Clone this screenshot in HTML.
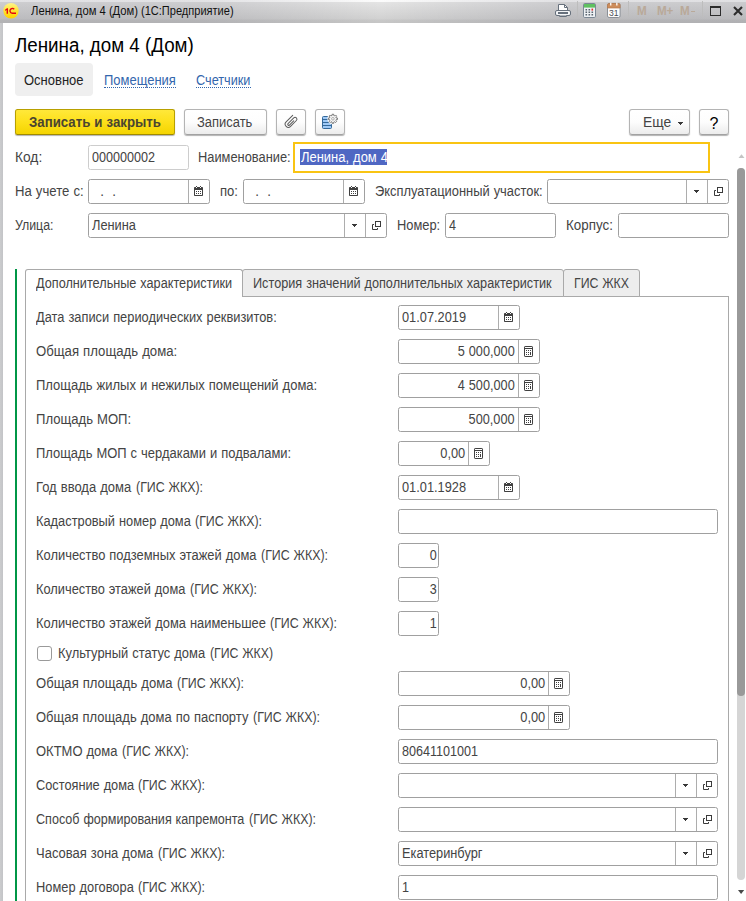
<!DOCTYPE html>
<html><head><meta charset="utf-8"><title>1C</title>
<style>
html,body{margin:0;padding:0;}
body{width:746px;height:901px;overflow:hidden;background:#fff;font-family:"Liberation Sans",sans-serif;font-size:13px;color:#333;position:relative;}
.a{position:absolute;}
.t{position:absolute;white-space:pre;line-height:16px;height:16px;color:#444;font-size:14px;transform-origin:0 0;word-spacing:0.45px;}
.i{position:absolute;box-sizing:border-box;border:1px solid #a0a0a0;border-radius:2.5px;background:#fff;height:25px;}
.i.lt{border-color:#cdcdcd;}
.s{position:absolute;top:0;bottom:0;width:1px;background:#adadad;}
.b{position:absolute;box-sizing:border-box;border:1px solid #b4b4b4;border-bottom-color:#a2a2a2;border-radius:3px;height:26px;background:linear-gradient(#ffffff 0%,#fdfdfd 50%,#ececec 100%);box-shadow:0 1px 1px rgba(0,0,0,0.3);}
.lk{position:absolute;color:#3366ad;font-size:13px;white-space:pre;border-bottom:1px dotted #2b5ea8;line-height:15px;height:15px;}
svg{position:absolute;overflow:visible;}
</style></head><body>
<div class="a" style="left:0;top:0;width:746px;height:23px;background:linear-gradient(90deg,rgba(0,0,25,0.10) 0%,rgba(0,0,25,0.10) 27%,rgba(0,0,25,0.05) 40%,rgba(0,0,0,0) 51%,rgba(0,0,25,0.05) 62%,rgba(0,0,25,0.10) 75%,rgba(0,0,25,0.11) 100%),linear-gradient(180deg,#fcfcfc 0px,#fbfbfb 1.5px,#e4e4e4 2.5px,#d1d1d1 19px,#c8c8c8 20px,#c6c6c6 22.5px,#e8e8e8 23px);"></div>
<div class="a" style="left:0;top:23px;width:3px;height:878px;background:linear-gradient(90deg,#cbccce,#c3c4c7);"></div>
<svg style="left:3px;top:3px" width="16" height="16" viewBox="0 0 16 16"><defs><linearGradient id="lg" x1="0" y1="0" x2="0" y2="1"><stop offset="0" stop-color="#fff38a"/><stop offset="0.55" stop-color="#ffe32a"/><stop offset="1" stop-color="#ffd000"/></linearGradient></defs><circle cx="8" cy="7.8" r="7.7" fill="url(#lg)"/><path d="M2.2 6.6 L4 5.2 H5 V10.8 H3.6 V7 L2.2 7.9 Z" fill="#e30613"/><path d="M11.2 6.3 A2.4 2.4 0 1 0 8.9 10.2 H13" fill="none" stroke="#e30613" stroke-width="1.35"/></svg>
<div class="t" style="left:30.8px;top:3px;font-size:12px;color:#111;word-spacing:0;transform:scaleX(0.937);">Ленина, дом 4 (Дом)</div>
<div class="t" style="left:141px;top:3px;font-size:12px;color:#111;transform:scaleX(0.92);">(1С:Предприятие)</div>
<svg style="left:555px;top:3px" width="17" height="15" viewBox="0 0 17 15"><path d="M3.5 7.5 V1.5 H9.5 L12.5 4.5 V7.5" fill="#fdfdfd" stroke="#66707c" stroke-width="1"/><path d="M9.5 1.5 V4.5 H12.5" fill="none" stroke="#66707c" stroke-width="1"/><rect x="0.5" y="7.5" width="15" height="5" rx="1.5" fill="#f2f4f6" stroke="#66707c" stroke-width="1"/><rect x="3.5" y="9.5" width="9" height="1" fill="#fff" stroke="#66707c" stroke-width="1"/><path d="M4.5 12.5 V13.5 H11.5 V12.5" fill="#fff" stroke="#66707c" stroke-width="1"/></svg>
<div class="a" style="left:577px;top:1px;width:1px;height:16px;background:#bdbdbd;"></div>
<svg style="left:583px;top:3px" width="13" height="15" viewBox="0 0 13 15"><rect x="0.5" y="0.5" width="12" height="14" rx="1.2" fill="#eef1f4" stroke="#7b8794" stroke-width="1"/><rect x="1" y="1" width="11" height="3.6" fill="#5fc060"/><g fill="#5b6670"><rect x="2.5" y="6" width="1.6" height="1.5"/><rect x="5.5" y="6" width="1.6" height="1.5"/><rect x="2.5" y="8.5" width="1.6" height="1.5"/><rect x="5.5" y="8.5" width="1.6" height="1.5"/><rect x="8.5" y="8.5" width="1.6" height="1.5"/><rect x="2.5" y="11" width="1.6" height="1.5"/><rect x="5.5" y="11" width="1.6" height="1.5"/><rect x="8.5" y="11" width="1.6" height="1.5"/></g><rect x="8.5" y="5.6" width="1.6" height="2" fill="#e03030"/></svg>
<svg style="left:607px;top:3px" width="14" height="15" viewBox="0 0 14 15"><rect x="0.5" y="0.5" width="12.6" height="14" rx="1.6" fill="#fdfdfd" stroke="#8a8f96" stroke-width="1"/><path d="M0.5 5 V2.1 A1.6 1.6 0 0 1 2.1 0.5 H11.5 A1.6 1.6 0 0 1 13.1 2.1 V5 Z" fill="#cd8d5c" stroke="#b9794a" stroke-width="0.7"/><rect x="3.1" y="-0.3" width="1.3" height="2.8" fill="#fff"/><rect x="9.2" y="-0.3" width="1.3" height="2.8" fill="#fff"/><text x="6.8" y="13" font-family="Liberation Sans, sans-serif" font-size="9.5" fill="#4a4f55" text-anchor="middle" textLength="9.6" lengthAdjust="spacingAndGlyphs">31</text></svg>
<div class="a" style="left:628px;top:1px;width:1px;height:16px;background:#bdbdbd;"></div>
<div class="t" style="left:637px;top:3px;font-size:13px;font-weight:bold;color:#b9a999;transform:scaleX(0.9);">M</div>
<div class="t" style="left:656.8px;top:3px;font-size:13px;font-weight:bold;color:#b9a999;transform:scaleX(0.9);letter-spacing:-0.3px;">M+</div>
<div class="t" style="left:679.6px;top:3px;font-size:13px;font-weight:bold;color:#b9a999;transform:scaleX(0.9);">M</div>
<div class="a" style="left:690.6px;top:10.5px;width:4.4px;height:1.6px;background:#b9a999;"></div>
<div class="a" style="left:702px;top:1px;width:1px;height:16px;background:#bdbdbd;"></div>
<div class="a" style="left:710px;top:6px;width:11px;height:10px;box-sizing:border-box;border:1px solid #2c2c2c;border-top-width:2px;"></div>
<svg style="left:733px;top:6px" width="10" height="10" viewBox="0 0 10 10"><path d="M1 1 L9 9 M9 1 L1 9" stroke="#2c2c2c" stroke-width="2.1"/></svg>
<div class="t" style="left:15px;top:33.6px;font-size:19.5px;line-height:22px;height:22px;color:#000;word-spacing:0;transform:scaleX(0.9625);">Ленина, дом 4 (Дом)</div>
<div class="a" style="left:15px;top:63px;width:78px;height:33px;background:#efefef;border-radius:4px;"></div>
<div class="t" style="left:24px;top:72px;transform:scaleX(0.9275);color:#222;">Основное</div>
<div class="t" style="left:104px;top:72px;transform:scaleX(0.9267);color:#3366ad;">Помещения</div>
<div class="a" style="left:104px;top:87px;width:72px;height:0;border-top:1px dotted #3366ad;"></div>
<div class="t" style="left:196px;top:72px;transform:scaleX(0.9067);color:#3366ad;">Счетчики</div>
<div class="a" style="left:196px;top:87px;width:55px;height:0;border-top:1px dotted #3366ad;"></div>
<div class="b" style="left:15px;top:109px;width:160px;background:linear-gradient(#ffe83a 0%,#fde01a 50%,#f4d400 100%);border-color:#b8a000;border-bottom-color:#a08a00;border-radius:2.5px;"></div>
<div class="t" style="left:29px;top:114px;transform:scaleX(0.9451);font-weight:bold;color:#4a4530;">Записать и закрыть</div>
<div class="b" style="left:184px;top:109px;width:83px;"></div>
<div class="t" style="left:197.4px;top:114px;transform:scaleX(0.9246);">Записать</div>
<div class="b" style="left:276px;top:109px;width:30px;"></div>
<div class="b" style="left:315px;top:109px;width:30px;"></div>
<svg style="left:276px;top:109px" width="30" height="26" viewBox="0 0 30 26"><g transform="translate(15,12.5) rotate(45)" fill="none" stroke="#5c5c5c" stroke-width="1.0" stroke-linecap="round"><path d="M-3.2,-5.6 L-3.2,3.7 A3.15 3.15 0 0 0 3.1,3.7 L3.1,-4.5 A1.85 1.85 0 0 0 -0.6,-4.5 L-0.6,3.6 A1 1 0 0 0 1.4,3.6 L1.4,-2.4"/></g></svg>
<svg style="left:315px;top:109px" width="30" height="26" viewBox="0 0 30 26"><rect x="7.5" y="7.5" width="9" height="12" rx="1" fill="#9fc9f6" stroke="#34699a" stroke-width="1"/><path d="M7.5 10.5 H16.5 M7.5 13.5 H16.5 M7.5 16.5 H16.5" stroke="#34699a" stroke-width="1"/><circle cx="17.9" cy="9.8" r="5.6" fill="#fbfbfb"/><polygon transform="translate(17.9,9.8)" points="4.53,-0.79 4.53,0.79 3.42,0.76 2.96,1.88 3.76,2.65 2.65,3.76 1.88,2.96 0.76,3.42 0.79,4.53 -0.79,4.53 -0.76,3.42 -1.88,2.96 -2.65,3.76 -3.76,2.65 -2.96,1.88 -3.42,0.76 -4.53,0.79 -4.53,-0.79 -3.42,-0.76 -2.96,-1.88 -3.76,-2.65 -2.65,-3.76 -1.88,-2.96 -0.76,-3.42 -0.79,-4.53 0.79,-4.53 0.76,-3.42 1.88,-2.96 2.65,-3.76 3.76,-2.65 2.96,-1.88 3.42,-0.76" fill="#f6f6f6" stroke="#6e6e6e" stroke-width="0.9"/><circle cx="17.9" cy="9.8" r="1.3" fill="#fff" stroke="#8a8a8a" stroke-width="0.7"/></svg>
<div class="b" style="left:629px;top:109px;width:61px;"></div>
<div class="t" style="left:643px;top:114px;transform:scaleX(0.9915);">Еще</div>
<svg style="left:678px;top:122px" width="5" height="3" viewBox="0 0 5 3" shape-rendering="crispEdges"><rect x="0" y="0" width="5" height="1" fill="#383838"/><rect x="1" y="1" width="3" height="1" fill="#383838"/><rect x="2" y="2" width="1" height="1" fill="#383838"/></svg>
<div class="b" style="left:699px;top:109px;width:30px;"></div>
<div class="t" style="left:709.6px;top:115px;font-size:16px;line-height:18px;height:18px;color:#000;">?</div>
<div class="t" style="left:14.5px;top:149px;transform:scaleX(0.9821);">Код:</div>
<div class="i lt" style="left:88px;top:145px;width:101px"><div class="t" style="left:3px;top:3px;transform:scaleX(0.8990);">000000002</div></div>
<div class="t" style="left:198.4px;top:149px;transform:scaleX(0.9179);">Наименование:</div>
<div class="a" style="left:293px;top:142px;width:417px;height:31px;box-sizing:border-box;border:2px solid #f9c413;background:#fff;"></div>
<div class="a" style="left:300px;top:149px;width:87px;height:16px;background:#4f67c3;"></div>
<div class="t" style="left:301px;top:149px;transform:scaleX(0.9257);color:#fff;">Ленина, дом 4</div>
<div class="t" style="left:14.5px;top:183px;transform:scaleX(0.9384);">На учете с:</div>
<div class="i" style="left:88px;top:179px;width:122px"><div class="s" style="left:99px"></div><svg style="left:105px;top:6px" width="9" height="10" viewBox="0 0 9 10"><rect x="0" y="1" width="9" height="9" rx="0.8" fill="#404040"/><rect x="1" y="4" width="7" height="5" fill="#fff"/><rect x="2" y="0" width="1" height="1" fill="#404040"/><rect x="6" y="0" width="1" height="1" fill="#404040"/><rect x="2" y="1" width="1" height="1" fill="#fff"/><rect x="6" y="1" width="1" height="1" fill="#fff"/><rect x="2" y="5" width="1" height="1" fill="#404040"/><rect x="4" y="5" width="1" height="1" fill="#404040"/><rect x="6" y="5" width="1" height="1" fill="#404040"/><rect x="2" y="7" width="1" height="1" fill="#404040"/><rect x="4" y="7" width="1" height="1" fill="#404040"/><rect x="6" y="7" width="1" height="1" fill="#404040"/></svg><div class="t" style="left:3px;top:3px;transform:scaleX(0.9547);">  .  .</div></div>
<div class="t" style="left:220px;top:183px;transform:scaleX(0.9347);">по:</div>
<div class="i" style="left:243px;top:179px;width:122px"><div class="s" style="left:99px"></div><svg style="left:105px;top:6px" width="9" height="10" viewBox="0 0 9 10"><rect x="0" y="1" width="9" height="9" rx="0.8" fill="#404040"/><rect x="1" y="4" width="7" height="5" fill="#fff"/><rect x="2" y="0" width="1" height="1" fill="#404040"/><rect x="6" y="0" width="1" height="1" fill="#404040"/><rect x="2" y="1" width="1" height="1" fill="#fff"/><rect x="6" y="1" width="1" height="1" fill="#fff"/><rect x="2" y="5" width="1" height="1" fill="#404040"/><rect x="4" y="5" width="1" height="1" fill="#404040"/><rect x="6" y="5" width="1" height="1" fill="#404040"/><rect x="2" y="7" width="1" height="1" fill="#404040"/><rect x="4" y="7" width="1" height="1" fill="#404040"/><rect x="6" y="7" width="1" height="1" fill="#404040"/></svg><div class="t" style="left:3px;top:3px;transform:scaleX(0.9547);">  .  .</div></div>
<div class="t" style="left:374.8px;top:183px;transform:scaleX(0.9215);">Эксплуатационный участок:</div>
<div class="i" style="left:547px;top:179px;width:182px"><div class="s" style="left:159px"></div><svg style="left:166px;top:7px" width="9" height="9" viewBox="0 0 9 9"><rect x="3.5" y="0.5" width="5" height="5" fill="#fff" stroke="#3b3b3b" stroke-width="1"/><path d="M2 3.5 H0.5 V8.5 H5.5 V7" fill="none" stroke="#3b3b3b" stroke-width="1"/></svg><div class="s" style="left:138px"></div><svg style="left:146px;top:10px" width="5" height="3" viewBox="0 0 5 3" shape-rendering="crispEdges"><rect x="0" y="0" width="5" height="1" fill="#383838"/><rect x="1" y="1" width="3" height="1" fill="#383838"/><rect x="2" y="2" width="1" height="1" fill="#383838"/></svg></div>
<div class="t" style="left:14.5px;top:217px;transform:scaleX(0.8816);">Улица:</div>
<div class="i" style="left:88px;top:213px;width:299px"><div class="s" style="left:276px"></div><svg style="left:283px;top:7px" width="9" height="9" viewBox="0 0 9 9"><rect x="3.5" y="0.5" width="5" height="5" fill="#fff" stroke="#3b3b3b" stroke-width="1"/><path d="M2 3.5 H0.5 V8.5 H5.5 V7" fill="none" stroke="#3b3b3b" stroke-width="1"/></svg><div class="s" style="left:255px"></div><svg style="left:263px;top:10px" width="5" height="3" viewBox="0 0 5 3" shape-rendering="crispEdges"><rect x="0" y="0" width="5" height="1" fill="#383838"/><rect x="1" y="1" width="3" height="1" fill="#383838"/><rect x="2" y="2" width="1" height="1" fill="#383838"/></svg><div class="t" style="left:3px;top:3px;transform:scaleX(0.9158);">Ленина</div></div>
<div class="t" style="left:396.6px;top:217px;transform:scaleX(0.9195);">Номер:</div>
<div class="i" style="left:445px;top:213px;width:111px"><div class="t" style="left:3px;top:3px;transform:scaleX(0.8990);">4</div></div>
<div class="t" style="left:566px;top:217px;transform:scaleX(0.9553);">Корпус:</div>
<div class="i" style="left:618px;top:213px;width:111px"></div>
<div class="a" style="left:15px;top:269px;width:2px;height:632px;background:#009646;"></div>
<div class="a" style="left:25px;top:296px;width:704px;height:620px;box-sizing:border-box;border:1px solid #a9a9a9;background:#fff;"></div>
<div class="a" style="left:242px;top:269px;width:322px;height:28px;box-sizing:border-box;border:1px solid #a9a9a9;border-radius:3px 3px 0 0;background:#ededed;"></div>
<div class="a" style="left:563px;top:269px;width:77px;height:28px;box-sizing:border-box;border:1px solid #a9a9a9;border-radius:3px 3px 0 0;background:#ededed;"></div>
<div class="a" style="left:25px;top:269px;width:218px;height:28px;box-sizing:border-box;border:1px solid #a9a9a9;border-bottom:none;border-radius:3px 3px 0 0;background:#fff;"></div>
<div class="t" style="left:36px;top:275px;transform:scaleX(0.9062);">Дополнительные характеристики</div>
<div class="t" style="left:253px;top:275px;transform:scaleX(0.9063);">История значений дополнительных характеристик</div>
<div class="t" style="left:574px;top:275px;transform:scaleX(0.8798);">ГИС ЖКХ</div>
<div class="t" style="left:36px;top:309px;transform:scaleX(0.9172);">Дата записи периодических реквизитов:</div>
<div class="i" style="left:398px;top:305px;width:122px"><div class="s" style="left:99px"></div><svg style="left:105px;top:6px" width="9" height="10" viewBox="0 0 9 10"><rect x="0" y="1" width="9" height="9" rx="0.8" fill="#404040"/><rect x="1" y="4" width="7" height="5" fill="#fff"/><rect x="2" y="0" width="1" height="1" fill="#404040"/><rect x="6" y="0" width="1" height="1" fill="#404040"/><rect x="2" y="1" width="1" height="1" fill="#fff"/><rect x="6" y="1" width="1" height="1" fill="#fff"/><rect x="2" y="5" width="1" height="1" fill="#404040"/><rect x="4" y="5" width="1" height="1" fill="#404040"/><rect x="6" y="5" width="1" height="1" fill="#404040"/><rect x="2" y="7" width="1" height="1" fill="#404040"/><rect x="4" y="7" width="1" height="1" fill="#404040"/><rect x="6" y="7" width="1" height="1" fill="#404040"/></svg><div class="t" style="left:3px;top:3px;transform:scaleX(0.9134);">01.07.2019</div></div>
<div class="t" style="left:36px;top:343px;transform:scaleX(0.9398);">Общая площадь дома:</div>
<div class="i" style="left:398px;top:339px;width:142px"><div class="s" style="left:119px"></div><svg style="left:125px;top:6px" width="9" height="11" viewBox="0 0 9 11"><rect x="0.5" y="0.5" width="8" height="10" rx="0.6" fill="#fff" stroke="#404040" stroke-width="1"/><rect x="0" y="2" width="9" height="1" fill="#404040"/><rect x="6" y="6" width="1" height="3" fill="#404040"/><rect x="2" y="4" width="1" height="1" fill="#404040"/><rect x="4" y="4" width="1" height="1" fill="#404040"/><rect x="6" y="4" width="1" height="1" fill="#404040"/><rect x="2" y="6" width="1" height="1" fill="#404040"/><rect x="4" y="6" width="1" height="1" fill="#404040"/><rect x="2" y="8" width="1" height="1" fill="#404040"/><rect x="4" y="8" width="1" height="1" fill="#404040"/></svg><div class="t" style="right:24px;top:3px;transform-origin:100% 0;transform:scaleX(0.9086);">5 000,000</div></div>
<div class="t" style="left:36px;top:377px;transform:scaleX(0.9273);">Площадь жилых и нежилых помещений дома:</div>
<div class="i" style="left:398px;top:373px;width:142px"><div class="s" style="left:119px"></div><svg style="left:125px;top:6px" width="9" height="11" viewBox="0 0 9 11"><rect x="0.5" y="0.5" width="8" height="10" rx="0.6" fill="#fff" stroke="#404040" stroke-width="1"/><rect x="0" y="2" width="9" height="1" fill="#404040"/><rect x="6" y="6" width="1" height="3" fill="#404040"/><rect x="2" y="4" width="1" height="1" fill="#404040"/><rect x="4" y="4" width="1" height="1" fill="#404040"/><rect x="6" y="4" width="1" height="1" fill="#404040"/><rect x="2" y="6" width="1" height="1" fill="#404040"/><rect x="4" y="6" width="1" height="1" fill="#404040"/><rect x="2" y="8" width="1" height="1" fill="#404040"/><rect x="4" y="8" width="1" height="1" fill="#404040"/></svg><div class="t" style="right:24px;top:3px;transform-origin:100% 0;transform:scaleX(0.9086);">4 500,000</div></div>
<div class="t" style="left:36px;top:411px;transform:scaleX(0.9348);">Площадь МОП:</div>
<div class="i" style="left:398px;top:407px;width:142px"><div class="s" style="left:119px"></div><svg style="left:125px;top:6px" width="9" height="11" viewBox="0 0 9 11"><rect x="0.5" y="0.5" width="8" height="10" rx="0.6" fill="#fff" stroke="#404040" stroke-width="1"/><rect x="0" y="2" width="9" height="1" fill="#404040"/><rect x="6" y="6" width="1" height="3" fill="#404040"/><rect x="2" y="4" width="1" height="1" fill="#404040"/><rect x="4" y="4" width="1" height="1" fill="#404040"/><rect x="6" y="4" width="1" height="1" fill="#404040"/><rect x="2" y="6" width="1" height="1" fill="#404040"/><rect x="4" y="6" width="1" height="1" fill="#404040"/><rect x="2" y="8" width="1" height="1" fill="#404040"/><rect x="4" y="8" width="1" height="1" fill="#404040"/></svg><div class="t" style="right:24px;top:3px;transform-origin:100% 0;transform:scaleX(0.9090);">500,000</div></div>
<div class="t" style="left:36px;top:445px;transform:scaleX(0.9252);">Площадь МОП с чердаками и подвалами:</div>
<div class="i" style="left:398px;top:441px;width:92px"><div class="s" style="left:69px"></div><svg style="left:75px;top:6px" width="9" height="11" viewBox="0 0 9 11"><rect x="0.5" y="0.5" width="8" height="10" rx="0.6" fill="#fff" stroke="#404040" stroke-width="1"/><rect x="0" y="2" width="9" height="1" fill="#404040"/><rect x="6" y="6" width="1" height="3" fill="#404040"/><rect x="2" y="4" width="1" height="1" fill="#404040"/><rect x="4" y="4" width="1" height="1" fill="#404040"/><rect x="6" y="4" width="1" height="1" fill="#404040"/><rect x="2" y="6" width="1" height="1" fill="#404040"/><rect x="4" y="6" width="1" height="1" fill="#404040"/><rect x="2" y="8" width="1" height="1" fill="#404040"/><rect x="4" y="8" width="1" height="1" fill="#404040"/></svg><div class="t" style="right:24px;top:3px;transform-origin:100% 0;transform:scaleX(0.9175);">0,00</div></div>
<div class="t" style="left:36px;top:479px;transform:scaleX(0.9287);">Год ввода дома </div>
<div class="t" style="left:135.8px;top:479px;transform:scaleX(0.8848);">(ГИС ЖКХ):</div>
<div class="i" style="left:398px;top:475px;width:122px"><div class="s" style="left:99px"></div><svg style="left:105px;top:6px" width="9" height="10" viewBox="0 0 9 10"><rect x="0" y="1" width="9" height="9" rx="0.8" fill="#404040"/><rect x="1" y="4" width="7" height="5" fill="#fff"/><rect x="2" y="0" width="1" height="1" fill="#404040"/><rect x="6" y="0" width="1" height="1" fill="#404040"/><rect x="2" y="1" width="1" height="1" fill="#fff"/><rect x="6" y="1" width="1" height="1" fill="#fff"/><rect x="2" y="5" width="1" height="1" fill="#404040"/><rect x="4" y="5" width="1" height="1" fill="#404040"/><rect x="6" y="5" width="1" height="1" fill="#404040"/><rect x="2" y="7" width="1" height="1" fill="#404040"/><rect x="4" y="7" width="1" height="1" fill="#404040"/><rect x="6" y="7" width="1" height="1" fill="#404040"/></svg><div class="t" style="left:3px;top:3px;transform:scaleX(0.9134);">01.01.1928</div></div>
<div class="t" style="left:36px;top:513px;transform:scaleX(0.9163);">Кадастровый номер дома </div>
<div class="t" style="left:194.8px;top:513px;transform:scaleX(0.8848);">(ГИС ЖКХ):</div>
<div class="i" style="left:398px;top:509px;width:320px"></div>
<div class="t" style="left:36px;top:547px;transform:scaleX(0.9222);">Количество подземных этажей дома </div>
<div class="t" style="left:260.8px;top:547px;transform:scaleX(0.8848);">(ГИС ЖКХ):</div>
<div class="i" style="left:398px;top:543px;width:41px"><div class="t" style="right:1px;top:3px;transform-origin:100% 0;transform:scaleX(0.8990);">0</div></div>
<div class="t" style="left:36px;top:581px;transform:scaleX(0.9160);">Количество этажей дома </div>
<div class="t" style="left:190.2px;top:581px;transform:scaleX(0.8848);">(ГИС ЖКХ):</div>
<div class="i" style="left:398px;top:577px;width:41px"><div class="t" style="right:1px;top:3px;transform-origin:100% 0;transform:scaleX(0.8990);">3</div></div>
<div class="t" style="left:36px;top:615px;transform:scaleX(0.9198);">Количество этажей дома наименьшее </div>
<div class="t" style="left:269.8px;top:615px;transform:scaleX(0.8848);">(ГИС ЖКХ):</div>
<div class="i" style="left:398px;top:611px;width:41px"><div class="t" style="right:1px;top:3px;transform-origin:100% 0;transform:scaleX(0.8990);">1</div></div>
<div class="t" style="left:36px;top:675px;transform:scaleX(0.9323);">Общая площадь дома </div>
<div class="t" style="left:177.3px;top:675px;transform:scaleX(0.8848);">(ГИС ЖКХ):</div>
<div class="i" style="left:398px;top:671px;width:172px"><div class="s" style="left:149px"></div><svg style="left:155px;top:6px" width="9" height="11" viewBox="0 0 9 11"><rect x="0.5" y="0.5" width="8" height="10" rx="0.6" fill="#fff" stroke="#404040" stroke-width="1"/><rect x="0" y="2" width="9" height="1" fill="#404040"/><rect x="6" y="6" width="1" height="3" fill="#404040"/><rect x="2" y="4" width="1" height="1" fill="#404040"/><rect x="4" y="4" width="1" height="1" fill="#404040"/><rect x="6" y="4" width="1" height="1" fill="#404040"/><rect x="2" y="6" width="1" height="1" fill="#404040"/><rect x="4" y="6" width="1" height="1" fill="#404040"/><rect x="2" y="8" width="1" height="1" fill="#404040"/><rect x="4" y="8" width="1" height="1" fill="#404040"/></svg><div class="t" style="right:24px;top:3px;transform-origin:100% 0;transform:scaleX(0.9175);">0,00</div></div>
<div class="t" style="left:36px;top:709px;transform:scaleX(0.9269);">Общая площадь дома по паспорту </div>
<div class="t" style="left:253.4px;top:709px;transform:scaleX(0.8848);">(ГИС ЖКХ):</div>
<div class="i" style="left:398px;top:705px;width:172px"><div class="s" style="left:149px"></div><svg style="left:155px;top:6px" width="9" height="11" viewBox="0 0 9 11"><rect x="0.5" y="0.5" width="8" height="10" rx="0.6" fill="#fff" stroke="#404040" stroke-width="1"/><rect x="0" y="2" width="9" height="1" fill="#404040"/><rect x="6" y="6" width="1" height="3" fill="#404040"/><rect x="2" y="4" width="1" height="1" fill="#404040"/><rect x="4" y="4" width="1" height="1" fill="#404040"/><rect x="6" y="4" width="1" height="1" fill="#404040"/><rect x="2" y="6" width="1" height="1" fill="#404040"/><rect x="4" y="6" width="1" height="1" fill="#404040"/><rect x="2" y="8" width="1" height="1" fill="#404040"/><rect x="4" y="8" width="1" height="1" fill="#404040"/></svg><div class="t" style="right:24px;top:3px;transform-origin:100% 0;transform:scaleX(0.9175);">0,00</div></div>
<div class="t" style="left:36px;top:743px;transform:scaleX(0.9274);">ОКТМО дома </div>
<div class="t" style="left:121.5px;top:743px;transform:scaleX(0.8848);">(ГИС ЖКХ):</div>
<div class="i" style="left:398px;top:739px;width:320px"><div class="t" style="left:3px;top:3px;transform:scaleX(0.8990);">80641101001</div></div>
<div class="t" style="left:36px;top:777px;transform:scaleX(0.9120);">Состояние дома </div>
<div class="t" style="left:138.2px;top:777px;transform:scaleX(0.8848);">(ГИС ЖКХ):</div>
<div class="i" style="left:398px;top:773px;width:320px"><div class="s" style="left:297px"></div><svg style="left:304px;top:7px" width="9" height="9" viewBox="0 0 9 9"><rect x="3.5" y="0.5" width="5" height="5" fill="#fff" stroke="#3b3b3b" stroke-width="1"/><path d="M2 3.5 H0.5 V8.5 H5.5 V7" fill="none" stroke="#3b3b3b" stroke-width="1"/></svg><div class="s" style="left:276px"></div><svg style="left:284px;top:10px" width="5" height="3" viewBox="0 0 5 3" shape-rendering="crispEdges"><rect x="0" y="0" width="5" height="1" fill="#383838"/><rect x="1" y="1" width="3" height="1" fill="#383838"/><rect x="2" y="2" width="1" height="1" fill="#383838"/></svg></div>
<div class="t" style="left:36px;top:811px;transform:scaleX(0.8981);">Способ формирования капремонта </div>
<div class="t" style="left:249.1px;top:811px;transform:scaleX(0.8848);">(ГИС ЖКХ):</div>
<div class="i" style="left:398px;top:807px;width:320px"><div class="s" style="left:297px"></div><svg style="left:304px;top:7px" width="9" height="9" viewBox="0 0 9 9"><rect x="3.5" y="0.5" width="5" height="5" fill="#fff" stroke="#3b3b3b" stroke-width="1"/><path d="M2 3.5 H0.5 V8.5 H5.5 V7" fill="none" stroke="#3b3b3b" stroke-width="1"/></svg><div class="s" style="left:276px"></div><svg style="left:284px;top:10px" width="5" height="3" viewBox="0 0 5 3" shape-rendering="crispEdges"><rect x="0" y="0" width="5" height="1" fill="#383838"/><rect x="1" y="1" width="3" height="1" fill="#383838"/><rect x="2" y="2" width="1" height="1" fill="#383838"/></svg></div>
<div class="t" style="left:36px;top:845px;transform:scaleX(0.9288);">Часовая зона дома </div>
<div class="t" style="left:157.5px;top:845px;transform:scaleX(0.8848);">(ГИС ЖКХ):</div>
<div class="i" style="left:398px;top:841px;width:320px"><div class="s" style="left:297px"></div><svg style="left:304px;top:7px" width="9" height="9" viewBox="0 0 9 9"><rect x="3.5" y="0.5" width="5" height="5" fill="#fff" stroke="#3b3b3b" stroke-width="1"/><path d="M2 3.5 H0.5 V8.5 H5.5 V7" fill="none" stroke="#3b3b3b" stroke-width="1"/></svg><div class="s" style="left:276px"></div><svg style="left:284px;top:10px" width="5" height="3" viewBox="0 0 5 3" shape-rendering="crispEdges"><rect x="0" y="0" width="5" height="1" fill="#383838"/><rect x="1" y="1" width="3" height="1" fill="#383838"/><rect x="2" y="2" width="1" height="1" fill="#383838"/></svg><div class="t" style="left:3px;top:3px;transform:scaleX(0.9132);">Екатеринбург</div></div>
<div class="t" style="left:36px;top:879px;transform:scaleX(0.9173);">Номер договора </div>
<div class="t" style="left:138.2px;top:879px;transform:scaleX(0.8848);">(ГИС ЖКХ):</div>
<div class="i" style="left:398px;top:875px;width:320px"><div class="t" style="left:3px;top:3px;transform:scaleX(0.8990);">1</div></div>
<div class="a" style="left:37px;top:646px;width:15px;height:15px;box-sizing:border-box;border:1px solid #9a9a9a;border-radius:3px;background:#fff;"></div>
<div class="t" style="left:58px;top:645px;transform:scaleX(0.9237);">Культурный статус дома </div>
<div class="t" style="left:209.8px;top:645px;transform:scaleX(0.8770);">(ГИС ЖКХ)</div>
<svg style="left:737.6px;top:154px" width="7" height="4" viewBox="0 0 7 4"><path d="M0.5 4 L6.5 4 L3.5 0.3 Z" fill="#c4c4c4"/></svg>
<div class="a" style="left:737.4px;top:168px;width:7.6px;height:712px;border-radius:4px;background:#d5d5d5;"></div>
<div class="a" style="left:737.4px;top:168px;width:7.6px;height:527.5px;border-radius:4px;background:#999;"></div>
<svg style="left:737.9px;top:890px" width="7" height="4" viewBox="0 0 7 4"><path d="M0 0 L6.2 0 L3.1 3.9 Z" fill="#484848"/></svg>
</body></html>
